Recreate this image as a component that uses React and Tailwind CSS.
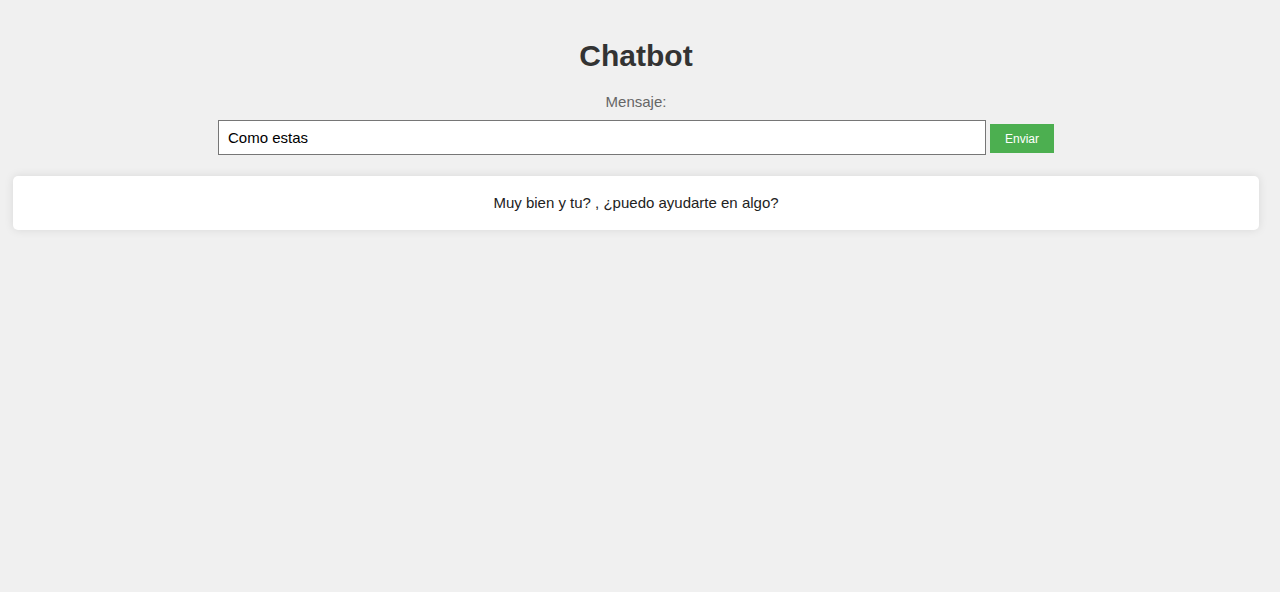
import React, { useState } from 'react';

const App = () => {
  const [mensaje, setMensaje] = useState('Como estas');
  const [respuesta] = useState('Muy bien y tu? , ¿puedo ayudarte en algo?');

  return (
    <div className="min-h-screen bg-[#f0f0f0] pl-[13px] pr-[21px] pt-[38px] font-['Liberation_Sans',Arial,sans-serif]">
      <h1 className="text-center text-[30px] leading-[35px] font-bold text-[#333]">Chatbot</h1>

      <p className="mt-[20px] text-center text-[15px] leading-[17px] text-[#666]">Mensaje:</p>

      <form
        className="mt-[10px] flex items-center justify-center gap-[4px]"
        onSubmit={(e) => e.preventDefault()}
      >
        <input
          type="text"
          value={mensaje}
          onChange={(e) => setMensaje(e.target.value)}
          className="h-[35px] w-[768px] border border-[#767676] bg-white px-[9px] text-[15px] text-black outline-none"
        />
        <button
          type="submit"
          className="mt-[2px] h-[29px] w-[64px] bg-[#4caf50] text-[12px] text-white"
        >
          Enviar
        </button>
      </form>

      <div className="mt-[21px] rounded-[5px] bg-white py-[18px] text-center text-[15px] leading-[18px] text-[#222] shadow-[0_0_10px_rgba(0,0,0,0.1)]">
        {respuesta}
      </div>
    </div>
  );
};

export default App;
